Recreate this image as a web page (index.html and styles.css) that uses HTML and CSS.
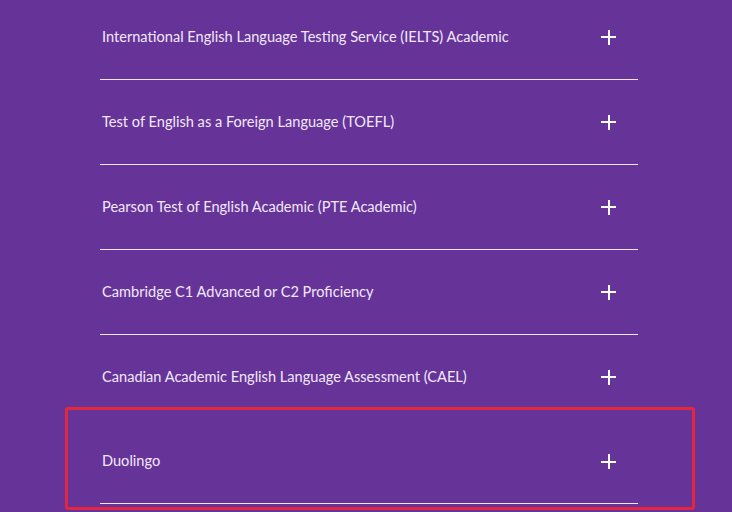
FILE: index.html
```html
<!DOCTYPE html>
<html lang="en">
<head>
    <meta charset="UTF-8">
    <title>English Language Tests</title>
    <link rel="stylesheet" href="styles.css">
</head>
<body>
    <div class="accordion">
        <div class="item">
            <span class="title">International English Language Testing Service (IELTS) Academic</span>
            <span class="plus"></span>
        </div>
        <div class="item">
            <span class="title">Test of English as a Foreign Language (TOEFL)</span>
            <span class="plus"></span>
        </div>
        <div class="item">
            <span class="title">Pearson Test of English Academic (PTE Academic)</span>
            <span class="plus"></span>
        </div>
        <div class="item">
            <span class="title">Cambridge C1 Advanced or C2 Proficiency</span>
            <span class="plus"></span>
        </div>
        <div class="item no-line">
            <span class="title">Canadian Academic English Language Assessment (CAEL)</span>
            <span class="plus"></span>
        </div>
        <div class="item highlighted">
            <span class="title">Duolingo</span>
            <span class="plus"></span>
        </div>
    </div>
</body>
</html>
```

FILE: styles.css
```css
body {
    font-family: 'Lato', 'Open Sans', sans-serif;
    background-color: #663399;
    margin: 0;
    padding: 0;
    height: 512px;
    overflow: hidden;
}

.accordion {
    width: 538px;
    margin-left: 100px;
    margin-top: -5px;
}

.item {
    display: flex;
    justify-content: space-between;
    align-items: center;
    height: 82px;
    padding: 0 22px 2px 2px;
    border-bottom: 1px solid #efe6f7;
}

.item.no-line {
    border-bottom-color: transparent;
}

.item.highlighted {
    position: relative;
    height: 81px;
}

/* red annotation box around the last row */
.item.highlighted::after {
    content: '';
    position: absolute;
    left: -35px;
    top: -13px;
    width: 624px;
    height: 97px;
    border: 3px solid #e2263d;
    border-radius: 3px;
}

.title {
    color: #f1e9fa;
    font-size: 14.6px;
}

.plus {
    position: relative;
    width: 15px;
    height: 15px;
    margin-top: 2px;
}

.plus::before,
.plus::after {
    content: '';
    position: absolute;
    background-color: #ffffff;
}

.plus::before {
    left: 0;
    top: 6.5px;
    width: 15px;
    height: 2px;
}

.plus::after {
    left: 6.5px;
    top: 0;
    width: 2px;
    height: 15px;
}
```
